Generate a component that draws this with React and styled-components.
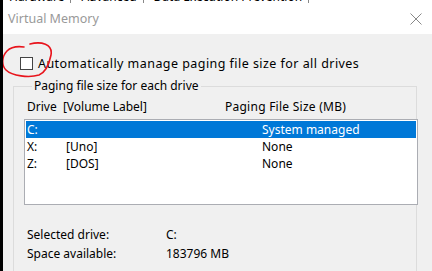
import React from 'react';
import styled, { createGlobalStyle } from 'styled-components';

const GlobalStyle = createGlobalStyle`
  html, body {
    margin: 0;
    padding: 0;
    background: #f0f0f0;
    overflow: hidden;
  }
  body {
    font-family: "Noto Sans", "Open Sans", sans-serif;
    font-size: 12px;
    color: #000;
  }
`;

const Frame = styled.div`
  display: flex;
  width: 432px;
  height: 271px;
  overflow: hidden;
  border-left: 3px solid #000;
  box-sizing: border-box;
  position: relative;
`;

const Window = styled.div`
  flex: 1;
  display: flex;
  flex-direction: column;
  background: #f0f0f0;
  min-height: 0;
  & > * {
    flex-shrink: 0;
  }
`;

const TabStrip = styled.div`
  display: block;
  height: 3px;
  overflow: hidden;
  background: #fff;
`;

const TabText = styled.div`
  display: flex;
  gap: 10px;
  padding-left: 6px;
  margin-top: -10px;
  white-space: nowrap;
  line-height: 13px;
  font-size: 12px;
  span {
    padding-right: 6px;
    border-right: 1px solid #888;
  }
`;

const TitleBar = styled.div`
  height: 31px;
  background: #fff;
  display: flex;
  align-items: center;
  justify-content: space-between;
  padding: 0 10px 0 5px;
`;

const Title = styled.div`
  color: #999;
  font-size: 12.5px;
`;

const Content = styled.div`
  display: flex;
  flex-direction: column;
  padding: 22px 0 0 10px;
`;

const CheckRow = styled.label`
  display: flex;
  align-items: center;
  gap: 5px;
  padding-left: 7px;
  height: 14px;
`;

const CheckBox = styled.span`
  width: 11px;
  height: 11px;
  border: 1px solid #444;
  background: #fff;
  display: inline-block;
  flex-shrink: 0;
`;

const CheckLabel = styled.span`
  font-size: 12.5px;
  letter-spacing: 0.45px;
  white-space: nowrap;
`;

const Group = styled.fieldset`
  margin: 7px 0 0 0;
  width: 404px;
  box-sizing: border-box;
  border: 1px solid #dcdcdc;
  padding: 0 0 40px 12px;
  min-width: 0;
`;

const Legend = styled.legend`
  padding: 0 2px;
  margin-left: 6px;
  line-height: 18px;
`;

const HeaderRow = styled.div`
  display: grid;
  grid-template-columns: 198px 1fr;
  padding: 4px 0 0 1px;
  height: 18px;
  line-height: 16px;
  white-space: pre;
`;

const SizeHeader = styled.span`
  letter-spacing: 0.25px;
`;

const ListBox = styled.div`
  width: 394px;
  height: 86px;
  box-sizing: border-box;
  border: 1px solid #abadb3;
  background: #fff;
  padding: 1px;
  margin: 2px -2px 0 -2px;
`;

const ListRow = styled.div`
  display: grid;
  grid-template-columns: 39px 196px 1fr;
  height: 17px;
  line-height: 17px;
  padding-left: 1px;
  background: ${p => (p.selected ? '#0078d7' : 'transparent')};
  color: ${p => (p.selected ? '#fff' : '#000')};
`;

const InfoGrid = styled.div`
  display: grid;
  grid-template-columns: 139px 1fr;
  row-gap: 2px;
  padding: 21px 0 0 1px;
  line-height: 17px;
`;

const Circle = styled.svg`
  position: absolute;
  left: -3px;
  top: 40px;
  pointer-events: none;
`;

const rows = [
  { drive: 'C:', label: '', size: 'System managed', selected: true },
  { drive: 'X:', label: '[Uno]', size: 'None' },
  { drive: 'Z:', label: '[DOS]', size: 'None' },
];

export default function App() {
  return (
    <>
      <GlobalStyle />
      <Frame>
        <Window>
          <TabStrip>
            <TabText>
              <span>Hardware</span>
              <span>Advanced</span>
              <span>Data Execution Prevention</span>
            </TabText>
          </TabStrip>
          <TitleBar>
            <Title>Virtual Memory</Title>
            <svg width="12" height="12" viewBox="0 0 12 12">
              <path d="M0.5 0.5 L11.5 11.5 M11.5 0.5 L0.5 11.5" stroke="#888" strokeWidth="1" fill="none" />
            </svg>
          </TitleBar>
          <Content>
            <CheckRow>
              <CheckBox />
              <CheckLabel>Automatically manage paging file size for all drives</CheckLabel>
            </CheckRow>
            <Group>
              <Legend>Paging file size for each drive</Legend>
              <HeaderRow>
                <span>Drive  [Volume Label]</span>
                <SizeHeader>Paging File Size (MB)</SizeHeader>
              </HeaderRow>
              <ListBox>
                {rows.map(r => (
                  <ListRow key={r.drive} selected={r.selected}>
                    <span>{r.drive}</span>
                    <span>{r.label}</span>
                    <span>{r.size}</span>
                  </ListRow>
                ))}
              </ListBox>
              <InfoGrid>
                <span>Selected drive:</span>
                <span>C:</span>
                <span>Space available:</span>
                <span>183796 MB</span>
              </InfoGrid>
            </Group>
          </Content>
        </Window>
        <Circle width="60" height="40" viewBox="0 0 60 40">
          <path
            d="M30 4 C41 1 53 4 51 15 C49 25 46 32 39 35 C29 38 12 36 6 30 C1 25 2 16 7 11 C11 7 17 6 24 7"
            stroke="#e8141c"
            strokeWidth="1.6"
            fill="none"
            strokeLinecap="round"
          />
        </Circle>
      </Frame>
    </>
  );
}
